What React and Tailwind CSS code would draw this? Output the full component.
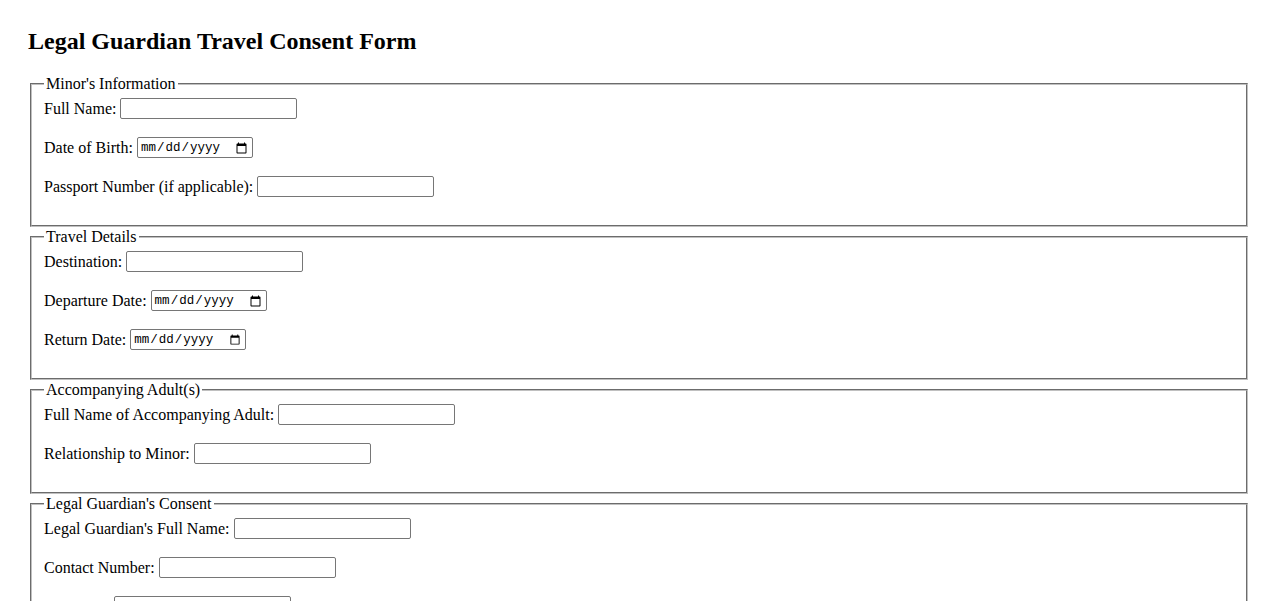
const SECTIONS = [
  {
    legend: "Minor's Information",
    fields: [
      { label: 'Full Name:', type: 'text' },
      { label: 'Date of Birth:', type: 'date' },
      { label: 'Passport Number (if applicable):', type: 'text' },
    ],
  },
  {
    legend: 'Travel Details',
    fields: [
      { label: 'Destination:', type: 'text' },
      { label: 'Departure Date:', type: 'date' },
      { label: 'Return Date:', type: 'date' },
    ],
  },
  {
    legend: 'Accompanying Adult(s)',
    fields: [
      { label: 'Full Name of Accompanying Adult:', type: 'text' },
      { label: 'Relationship to Minor:', type: 'text' },
    ],
  },
  {
    legend: "Legal Guardian's Consent",
    fields: [
      { label: "Legal Guardian's Full Name:", type: 'text' },
      { label: 'Contact Number:', type: 'text' },
      { label: 'Signature:', type: 'text' },
      { label: 'Date:', type: 'date' },
    ],
  },
]

function Field({ label, type }) {
  return (
    <div className="flex items-center gap-[4px] h-[23px] mb-4">
      <label className="leading-[18px]">{label}</label>
      {type === 'date' ? (
        <input
          type="date"
          className="w-[116px] h-[21px] border border-[#767676] rounded-[2px] px-[2px] pt-[2px] pb-0 bg-white text-[12.5px] font-['Liberation_Mono','DejaVu_Sans_Mono',monospace]"
        />
      ) : (
        <input
          type="text"
          className="w-[177px] h-[21px] border border-[#767676] rounded-[2px] px-[2px] py-[1px] bg-white text-[13.33px] font-['Liberation_Sans',Arial,sans-serif]"
        />
      )}
    </div>
  )
}

export default function App() {
  return (
    <div className="min-h-screen bg-white text-black text-[16px] font-['Liberation_Serif','Times_New_Roman',serif] px-[28px] pt-[27px] pb-8">
      <h1 className="text-[24px] font-bold leading-[28px] mb-[20px]">Legal Guardian Travel Consent Form</h1>

      <form>
        {SECTIONS.map((s) => (
          <fieldset
            key={s.legend}
            className="mx-[2px] mb-[1px] border-2 [border-style:groove] border-[#c0c0c0] px-3 pt-[4px] pb-[11px]"
          >
            <legend className="px-[2px] leading-[18px]">{s.legend}</legend>
            {s.fields.map((f) => (
              <Field key={f.label} {...f} />
            ))}
          </fieldset>
        ))}
        <button type="submit" className="mt-4 border border-[#767676] rounded-[2px] px-[6px] py-[1px] bg-[#efefef] text-[13.33px] font-['Liberation_Sans',Arial,sans-serif]">
          Submit
        </button>
      </form>
    </div>
  )
}
